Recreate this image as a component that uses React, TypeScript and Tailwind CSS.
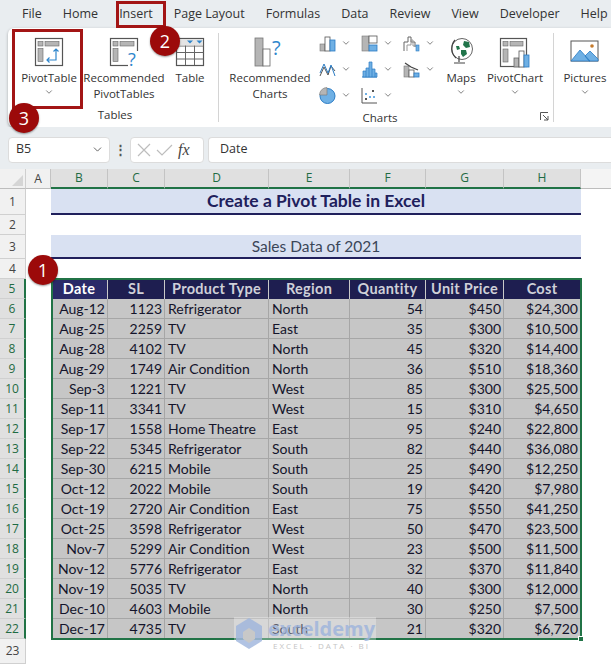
import { ChevronDown } from "lucide-react";

const ui = "font-['Open_Sans',sans-serif]";
const cell = "font-['Lato',sans-serif]";

const tabs = ["File", "Home", "Insert", "Page Layout", "Formulas", "Data", "Review", "View", "Developer", "Help"];

const columns = ["A", "B", "C", "D", "E", "F", "G", "H"];
const heads = ["Date", "SL", "Product Type", "Region", "Quantity", "Unit Price", "Cost"];

const rows = [
  ["Aug-12", "1123", "Refrigerator", "North", "54", "$450", "$24,300"],
  ["Aug-25", "2259", "TV", "East", "35", "$300", "$10,500"],
  ["Aug-28", "4102", "TV", "North", "45", "$320", "$14,400"],
  ["Aug-29", "1749", "Air Condition", "North", "36", "$510", "$18,360"],
  ["Sep-3", "1221", "TV", "West", "85", "$300", "$25,500"],
  ["Sep-11", "3341", "TV", "West", "15", "$310", "$4,650"],
  ["Sep-17", "1558", "Home Theatre", "East", "95", "$240", "$22,800"],
  ["Sep-22", "5345", "Refrigerator", "South", "82", "$440", "$36,080"],
  ["Sep-30", "6215", "Mobile", "South", "25", "$490", "$12,250"],
  ["Oct-12", "2022", "Mobile", "South", "19", "$420", "$7,980"],
  ["Oct-19", "2720", "Air Condition", "East", "75", "$550", "$41,250"],
  ["Oct-25", "3598", "Refrigerator", "West", "50", "$470", "$23,500"],
  ["Nov-7", "5299", "Air Condition", "West", "23", "$500", "$11,500"],
  ["Nov-12", "5776", "Refrigerator", "East", "32", "$370", "$11,840"],
  ["Nov-19", "5035", "TV", "North", "40", "$300", "$12,000"],
  ["Dec-10", "4603", "Mobile", "North", "30", "$250", "$7,500"],
  ["Dec-17", "4735", "TV", "South", "21", "$320", "$6,720"],
];

function Caret({ className = "" }: { className?: string }) {
  return <ChevronDown size={10} strokeWidth={1.6} className={`text-[#444] ${className}`} />;
}

function PivotIcon({ question }: { question?: boolean }) {
  return (
    <svg width="30" height="30" viewBox="0 0 30 30" fill="none">
      <rect x="1.500" y="1.500" width="27" height="27" fill="#fff" stroke="#555" strokeWidth="1.200" />
      <rect x="4" y="4.500" width="5" height="4.500" fill="#b5b5b5" stroke="#666" strokeWidth=".6" />
      <rect x="11" y="4.500" width="14" height="4.500" fill="#b5b5b5" stroke="#666" strokeWidth=".6" />
      <rect x="4" y="11.500" width="5" height="13" fill="#b5b5b5" stroke="#666" strokeWidth=".6" />
      {question ? (
        <>
          <rect x="19" y="14" width="11" height="16" fill="#fff" />
          <text x="19" y="29" fontSize="18" fill="#2f86cc" fontFamily="Open Sans, sans-serif">?</text>
        </>
      ) : (
        <path d="M22 12v11h-9M19.500 14.500L22 12l2.500 2.500M15.500 20.500L13 23l2.500 2.500" stroke="#2f86cc" strokeWidth="1.200" />
      )}
    </svg>
  );
}

function TableIcon() {
  return (
    <svg width="30" height="30" viewBox="0 0 30 30" fill="none">
      <rect x="1.500" y="1.500" width="27" height="27" fill="#fff" stroke="#555" strokeWidth="1.200" />
      <path d="M1.500 9h27M1.500 15.500h27M1.500 22h27M10.500 2v26M19.500 2v26" stroke="#666" strokeWidth="1" />
      <rect x="2" y="2" width="26" height="6.500" fill="#e4e4e4" />
      <path d="M12 3.500h6l-3 3zM21.500 3.500h6l-3 3z" fill="#2f86cc" />
    </svg>
  );
}

function RecChartIcon() {
  return (
    <svg width="32" height="30" viewBox="0 0 32 30" fill="none">
      <rect x="1" y="1" width="8" height="28" fill="#b5b5b5" stroke="#777" strokeWidth=".8" />
      <rect x="9" y="12" width="7" height="17" fill="#fff" stroke="#666" strokeWidth=".8" />
      <text x="18" y="18" fontSize="20" fill="#2f86cc" fontFamily="Open Sans, sans-serif">?</text>
    </svg>
  );
}

function SmallChart({ kind }: { kind: number }) {
  const blue = "#6fb0e4";
  const edge = "#2b7cc4";
  const gray = "#b5b5b5";
  const shapes = [
    <g key="0">
      <rect x="1" y="9" width="5" height="7" fill={gray} stroke="#777" strokeWidth=".6" />
      <rect x="6" y="2" width="5" height="14" fill="#fff" stroke="#555" strokeWidth=".8" />
      <rect x="11" y="5" width="5" height="11" fill={blue} stroke={edge} strokeWidth=".8" />
    </g>,
    <g key="1">
      <rect x="1" y="1" width="7" height="15" fill={gray} stroke="#777" strokeWidth=".6" />
      <rect x="8" y="1" width="8" height="7" fill="#fff" stroke="#555" strokeWidth=".8" />
      <rect x="8" y="10" width="8" height="6" fill={blue} stroke={edge} strokeWidth=".8" />
    </g>,
    <g key="2" fill="none">
      <path d="M1 16V7h4V2h3v5h4v5" stroke="#666" strokeWidth="1" />
      <path d="M4 16V10h4V5h2v6h3" stroke="#999" strokeWidth="1" />
      <rect x="13" y="10" width="3" height="6" fill={blue} stroke={edge} strokeWidth=".6" />
    </g>,
    <g key="3" fill="none">
      <path d="M1 15L5 6l4 8 3-9 4 5" stroke="#555" strokeWidth="1" />
      <path d="M1 12L5 3l4 9 3-8 4 11" stroke={edge} strokeWidth="1" />
    </g>,
    <g key="4">
      <path d="M1 16h15" stroke={edge} strokeWidth="1" />
      <path d="M2 16v-6h3V7h3V1h3v7h3v4h2v4z" fill={blue} stroke={edge} strokeWidth=".7" />
      <path d="M5 10v6M8 7v9M11 8v8M14 12v4" stroke={edge} strokeWidth=".7" />
    </g>,
    <g key="5">
      <rect x="1" y="5" width="5" height="11" fill={gray} stroke="#777" strokeWidth=".6" />
      <rect x="6" y="9" width="5" height="7" fill="#fff" stroke="#555" strokeWidth=".8" />
      <rect x="11" y="12" width="5" height="4" fill={blue} stroke={edge} strokeWidth=".8" />
      <path d="M2 2l6 4 7 3" stroke="#444" strokeWidth="1.300" fill="none" />
    </g>,
    <g key="6">
      <circle cx="8.500" cy="9" r="7.500" fill={blue} stroke={edge} strokeWidth="1" />
      <path d="M8 8V0.500A7.500 7.500 0 0 0 0.500 8z" fill={gray} stroke="#777" strokeWidth=".6" />
    </g>,
    <g key="7">
      <path d="M1 1v15h15" fill="none" stroke="#555" strokeWidth="1" />
      <rect x="4" y="11" width="2" height="2" fill="#555" />
      <rect x="4" y="6" width="2" height="2" fill={blue} />
      <rect x="8" y="9" width="2" height="2" fill={blue} />
      <rect x="11" y="3" width="2" height="2" fill="#555" />
      <rect x="12" y="9" width="2" height="2" fill={blue} />
    </g>,
  ];
  return (
    <div className="flex items-center gap-[5px] h-[26px]">
      <svg width="17" height="17" viewBox="0 0 17 17">{shapes[kind]}</svg>
      <Caret />
    </div>
  );
}

function GlobeIcon() {
  return (
    <svg width="26" height="30" viewBox="0 0 26 30" fill="none">
      <circle cx="14" cy="12" r="10.500" fill="#fff" stroke="#666" strokeWidth="1" />
      <path d="M7 3a13 13 0 0 0 1 18M11 19v6M6 26h11" stroke="#444" strokeWidth="1.200" />
      <path d="M16 4l5 1 1 5-4 1-3-3zM8 9l3 0 1 3-3 1zM13 13l5 0 1 4-4 3-2-3z" fill="#21744a" />
    </svg>
  );
}

function PivotChartIcon() {
  return (
    <svg width="32" height="32" viewBox="0 0 32 32" fill="none">
      <rect x="1.500" y="1.500" width="26" height="28" fill="#fff" stroke="#555" strokeWidth="1.200" />
      <rect x="4" y="4.500" width="5" height="4.500" fill="#b5b5b5" stroke="#666" strokeWidth=".6" />
      <rect x="11" y="4.500" width="13" height="4.500" fill="#b5b5b5" stroke="#666" strokeWidth=".6" />
      <rect x="4" y="12" width="5" height="13" fill="#b5b5b5" stroke="#666" strokeWidth=".6" />
      <rect x="15" y="21" width="5" height="9" fill="#b5b5b5" stroke="#666" strokeWidth=".8" />
      <rect x="20" y="14" width="5" height="16" fill="#fff" stroke="#555" strokeWidth=".8" />
      <rect x="25" y="18" width="5" height="12" fill="#6fb0e4" stroke="#2b7cc4" strokeWidth=".8" />
    </svg>
  );
}

function PictureIcon() {
  return (
    <svg width="30" height="24" viewBox="0 0 30 24" fill="none" className="mt-[3px]">
      <rect x="1" y="1" width="27" height="20" fill="#fff" stroke="#555" strokeWidth="1" />
      <path d="M1 21l9-11 10 11zM15 16l5-5 8 8v2h-9z" fill="#6fb0e4" stroke="#2b7cc4" strokeWidth=".8" />
      <circle cx="22" cy="6" r="1.800" fill="#c47a2c" />
    </svg>
  );
}

function BigButton({ width, icon, lines, caret }: { width: string; icon: React.ReactNode; lines: string[]; caret?: boolean }) {
  return (
    <div className={`${width} flex flex-col items-center shrink-0`}>
      <div className="h-[31px] flex items-start justify-center">{icon}</div>
      <div className="mt-[2px] text-center text-[11.500px] leading-[16px] text-[#333] whitespace-nowrap">
        {lines.map((l) => (
          <div key={l}>{l}</div>
        ))}
      </div>
      {caret && <Caret className="mt-[1px]" />}
    </div>
  );
}

function Divider() {
  return <div className="w-px h-[89px] bg-[#d4d4d4] shrink-0" />;
}

function GroupLabel({ children, className = "" }: { children: React.ReactNode; className?: string }) {
  return <div className={`text-center text-[11.500px] leading-[16px] text-[#333] ${className}`}>{children}</div>;
}

function Ribbon() {
  return (
    <div className="ml-[8px] h-[99px] bg-white rounded-l-[6px] shadow-[0_1px_3px_rgba(0,0,0,0.3)] flex items-start pt-[5px] overflow-hidden">
      <div className="w-[200px] shrink-0 ml-[7px] flex flex-col h-[90px]">
        <div className="flex h-[73px] pt-[4px]">
          <BigButton width="w-[68px]" icon={<PivotIcon />} lines={["PivotTable"]} caret />
          <BigButton width="w-[82px]" icon={<PivotIcon question />} lines={["Recommended", "PivotTables"]} />
          <BigButton width="w-[50px]" icon={<TableIcon />} lines={["Table"]} />
        </div>
        <GroupLabel className="mt-[4px]">Tables</GroupLabel>
      </div>
      <div className="ml-[3px]"><Divider /></div>
      <div className="w-[328px] shrink-0 ml-[6px] flex flex-col h-[90px] relative">
        <div className="flex h-[73px] pt-[4px]">
          <BigButton width="w-[90px]" icon={<RecChartIcon />} lines={["Recommended", "Charts"]} />
          <div className="ml-[4px] grid grid-cols-[42px_42px_36px] content-start -mt-[7px]">
            {[0, 1, 2, 3, 4, 5, 6, 7].map((k) => (
              <SmallChart key={k} kind={k} />
            ))}
          </div>
          <BigButton width="w-[44px]" icon={<GlobeIcon />} lines={["Maps"]} caret />
          <BigButton width="w-[64px]" icon={<PivotChartIcon />} lines={["PivotChart"]} caret />
        </div>
        <GroupLabel className="mt-[4px] pr-[18px]">Charts</GroupLabel>
        <svg className="absolute right-[4px] bottom-[2px]" width="9" height="9" viewBox="0 0 9 9" fill="none">
          <path d="M.5 8V.5H8M3 3l5 5M8 4v4H4" stroke="#555" strokeWidth="1" />
        </svg>
      </div>
      <Divider />
      <div className="ml-[5px] pt-[4px]">
        <BigButton width="w-[52px]" icon={<PictureIcon />} lines={["Pictures"]} caret />
      </div>
    </div>
  );
}

function FormulaBar() {
  return (
    <div className="h-[42px] bg-[#e9edf0] flex items-center pl-[8px] pt-[3px] gap-[8px]">
      <div className="w-[102px] h-[26px] bg-white rounded-[4px] border border-[#dcdcdc] flex items-center justify-between pl-[7px] pr-[5px] text-[12.500px] text-[#333]">
        B5
        <ChevronDown size={13} strokeWidth={1.500} className="text-[#444]" />
      </div>
      <div className="text-[#555] text-[13px] font-bold leading-none w-[4px] flex justify-center">⋮</div>
      <div className="w-[74px] h-[26px] bg-white rounded-[4px] border border-[#dcdcdc] flex items-center px-[6px] gap-[5px] text-[#bdbdbd]">
        <svg width="14" height="14" viewBox="0 0 14 14" fill="none"><path d="M1 1l12 12M13 1L1 13" stroke="#bdbdbd" strokeWidth="1.200" /></svg>
        <svg width="17" height="14" viewBox="0 0 17 14" fill="none"><path d="M1 7l5 5L16 2" stroke="#bdbdbd" strokeWidth="1.200" /></svg>
        <span className="font-['Liberation_Serif',serif] italic text-[16px] text-[#444] leading-none">fx</span>
      </div>
      <div className="flex-1 h-[26px] -ml-[4px] bg-white rounded-l-[4px] border border-[#dcdcdc] border-r-0 flex items-center pl-[11px] text-[12.500px] text-[#333]">
        Date
      </div>
    </div>
  );
}

const colWidths = ["w-[25px]", "w-[57px]", "w-[57px]", "w-[104px]", "w-[81px]", "w-[76px]", "w-[78px]", "w-[77px]"];

function RowHead({ n, h, on }: { n: number; h: string; on?: boolean }) {
  return (
    <div
      className={`${h} w-[26px] shrink-0 flex items-center justify-center text-[12px] border-b border-[#d0d0d0] ${ui} ${
        on ? "bg-[#e0e0e0] text-[#1f6b43] border-r-2 border-r-[#217346]" : "bg-[#f1f1f1] text-[#444] border-r border-r-[#cfcfcf]"
      }`}
    >
      {n}
    </div>
  );
}

function ColumnHeader() {
  return (
    <div className="flex h-[20px]">
      <div className="w-[26px] bg-[#f1f1f1] border-r border-[#cfcfcf] border-b border-b-[#bdbdbd] flex items-end justify-end p-[2px]">
        <div className="w-0 h-0 border-l-[11px] border-l-transparent border-b-[11px] border-b-[#d5d5d5]" />
      </div>
      {columns.map((c, i) => (
        <div
          key={c}
          className={`${colWidths[i]} flex items-center justify-center text-[12px] ${ui} border-r border-[#c4c4c4] ${
            i === 0 ? "bg-[#f1f1f1] text-[#444] border-b border-b-[#bdbdbd]" : "bg-[#e0e0e0] text-[#1f6b43] border-b-2 border-b-[#217346]"
          }`}
        >
          {c}
        </div>
      ))}
      <div className="flex-1 border-b border-[#bdbdbd] bg-[#f4f4f4]" />
    </div>
  );
}

function Banner({ text, h, bold }: { text: string; h: string; bold?: boolean }) {
  return (
    <div
      className={`${h} w-[530px] bg-[#d9e1f2] border-b-2 border-[#20205c] flex items-center justify-center pt-[1px] ${cell} ${
        bold ? "font-bold text-[17.500px] text-[#20205c]" : "text-[15.500px] text-[#3b4658]"
      }`}
    >
      {text}
    </div>
  );
}

function Sheet() {
  return (
    <div className="relative">
      <ColumnHeader />
      <div className="flex">
        <RowHead n={1} h="h-[26px]" />
        <div className="w-[25px]" />
        <Banner text="Create a Pivot Table in Excel" h="h-[26px]" bold />
      </div>
      <div className="flex">
        <RowHead n={2} h="h-[20px]" />
      </div>
      <div className="flex">
        <RowHead n={3} h="h-[24px]" />
        <div className="w-[25px]" />
        <Banner text="Sales Data of 2021" h="h-[24px]" />
      </div>
      <div className="flex">
        <RowHead n={4} h="h-[20px]" />
      </div>
      <div className="flex">
        <RowHead n={5} h="h-[20px]" on />
        <div className="w-[25px]" />
        {heads.map((t, i) => (
          <div
            key={t}
            className={`${colWidths[i + 1]} h-[20px] flex items-center justify-center border-r border-[#c9c9c9] font-bold text-[14.500px] tracking-[0.3px] whitespace-nowrap ${cell} ${
              i === 0 ? "bg-[#2a2a68] text-white" : "bg-[#1e1e50] text-[#cfd0d8]"
            }`}
          >
            {t}
          </div>
        ))}
      </div>
      {rows.map((r, ri) => (
        <div className="flex" key={r[0]}>
          <RowHead n={ri + 6} h="h-[20px]" on />
          <div className="w-[25px]" />
          {r.map((v, i) => (
            <div
              key={i}
              className={`${colWidths[i + 1]} h-[20px] flex items-center border-r border-b border-[#a6a6a6] bg-[#c6c6c6] text-[14px] text-[#14142b] ${cell} ${
                i === 2 || i === 3 ? "justify-start pl-[3px]" : "justify-end pr-[2px]"
              }`}
            >
              {v}
            </div>
          ))}
        </div>
      ))}
      <div className="flex">
        <RowHead n={23} h="h-[25px]" />
      </div>
    </div>
  );
}

function Badge({ n, className }: { n: number; className: string }) {
  return (
    <div
      className={`absolute w-[30px] h-[30px] rounded-full bg-[#9c0a0a] text-white flex items-center justify-center text-[18px] shadow-[0_1px_2px_rgba(0,0,0,0.4)] ${ui} ${className}`}
    >
      {n}
    </div>
  );
}

export default function App() {
  return (
    <div className={`relative w-[611px] h-[664px] overflow-hidden bg-white ${ui}`}>
      <div className="bg-[#e9edf0] h-[28px] flex items-center pl-[22px] gap-[21px] text-[12.500px] text-[#333] whitespace-nowrap">
        {tabs.map((t) => (
          <div key={t} className="relative">
            {t}
            {t === "Insert" && <div className="absolute left-0 right-0 -bottom-[4px] h-[2px] bg-[#217346]" />}
          </div>
        ))}
      </div>
      <div className="bg-[#e9edf0]">
        <Ribbon />
      </div>
      <FormulaBar />
      <Sheet />

      {/* selected range, callouts and watermark sit over the sheet */}
      <div className="absolute left-[51px] top-[278px] w-[531px] h-[362px] border-2 border-[#217346] pointer-events-none" />
      <div className="absolute left-[578px] top-[636px] w-[6px] h-[6px] bg-[#217346] border border-white" />
      <div className="absolute left-[116px] top-[1px] w-[50px] h-[27px] border-[3px] border-[#a31515]" />
      <div className="absolute left-[12px] top-[29px] w-[71px] h-[80px] border-[3px] border-[#a31515]" />
      <Badge n={2} className="left-[150px] top-[26px]" />
      <Badge n={3} className="left-[9px] top-[103px]" />
      <Badge n={1} className="left-[28px] top-[255px]" />
      <div className="absolute left-[234px] top-[617px] w-[142px] h-[40px] bg-white/30 flex items-start gap-[5px] pointer-events-none">
        <svg width="28" height="32" viewBox="0 0 28 32" className="ml-[1px] mt-[1px]">
          <path d="M14 0l13 8v15l-13 8-13-8V8z" fill="#9db4dc" fillOpacity="0.8" />
          <path d="M14 10l6 4v7l-6 4-6-4v-7z" fill="#c8c8c8" />
        </svg>
        <div className="flex flex-col items-center leading-none">
          <span className="text-[20px] font-bold text-[#9db4dc] opacity-80 leading-[24px]">exceldemy</span>
          <span className="text-[8px] tracking-[2px] text-[#c4c4c4] leading-[10px]">EXCEL · DATA · BI</span>
        </div>
      </div>
    </div>
  );
}
